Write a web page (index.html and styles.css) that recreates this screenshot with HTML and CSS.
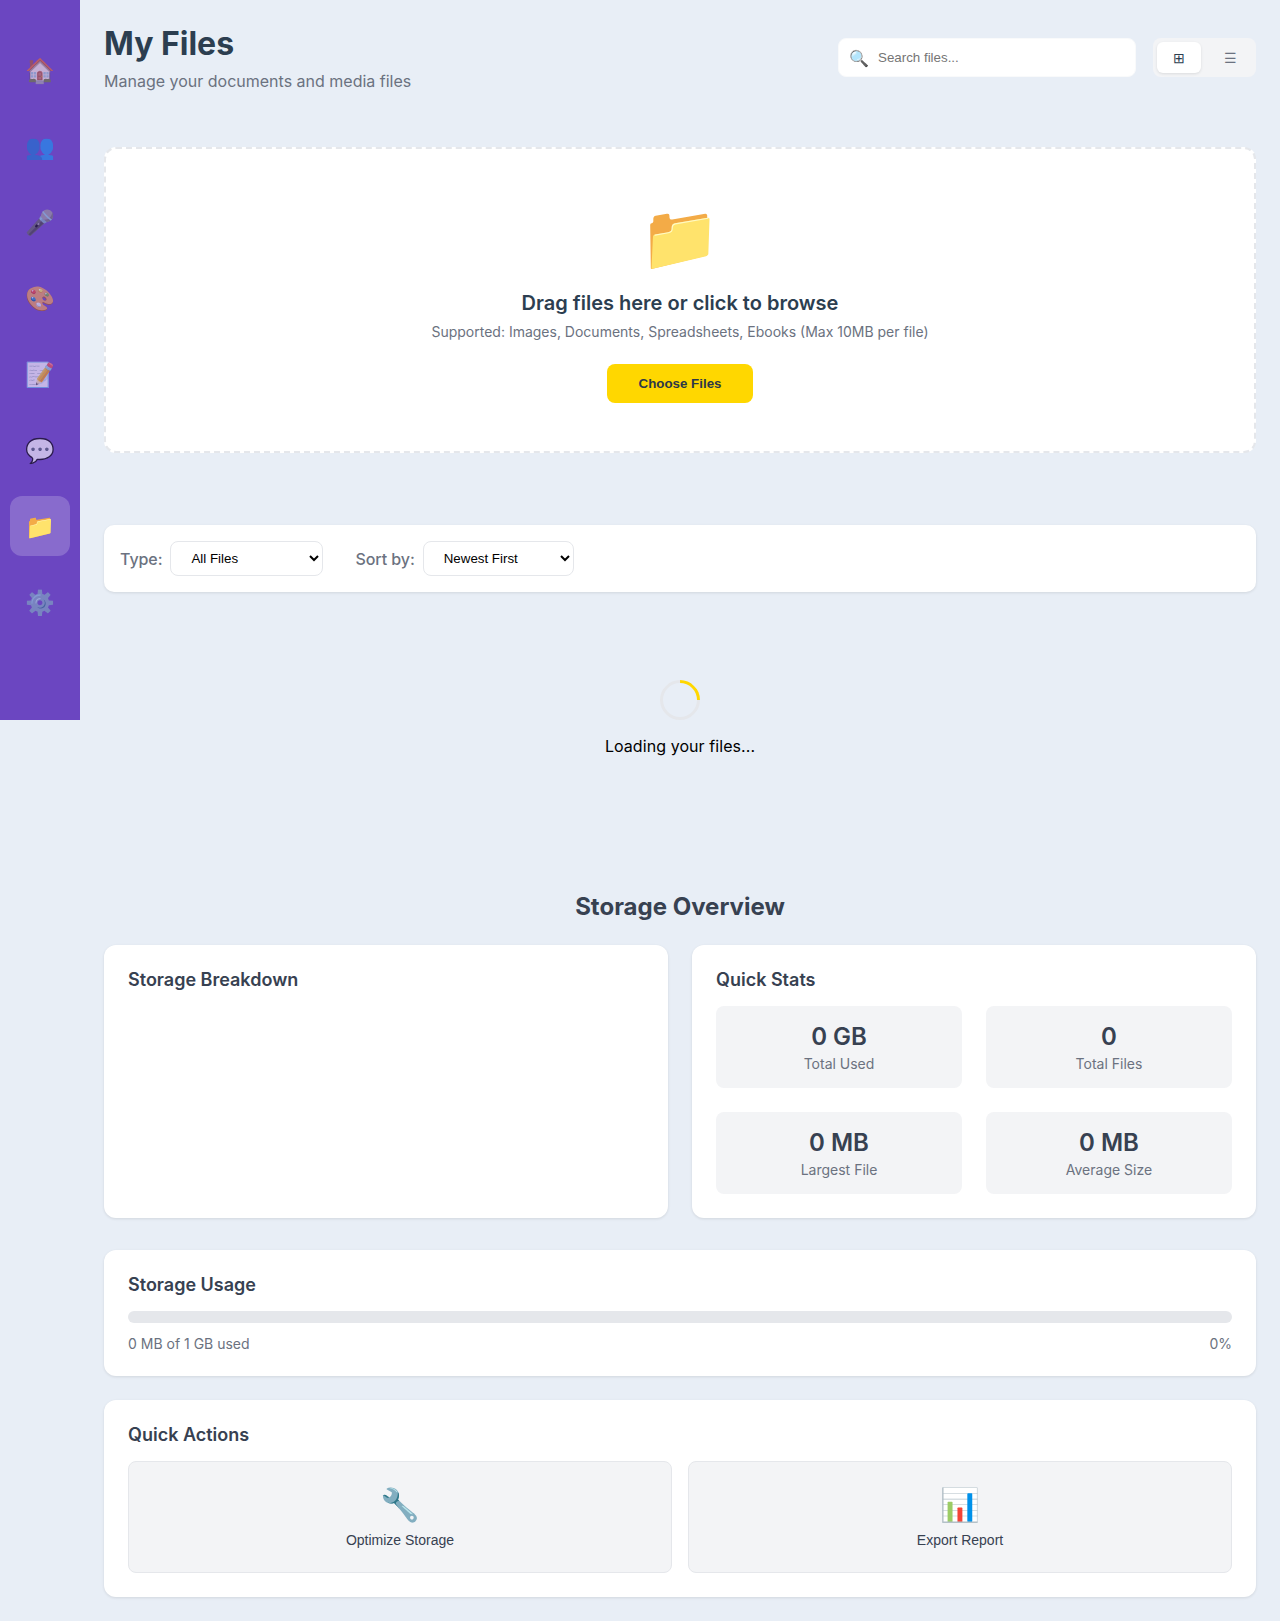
FILE: index.html
```html
<!DOCTYPE html>
<html lang="en">
<head>
<meta charset="utf-8">
<title>My Files</title>
<link rel="stylesheet" href="styles.css">
</head>
<body>
<div class="app">
  <nav class="sidebar">
    <a class="nav-item">🏠</a>
    <a class="nav-item">👥</a>
    <a class="nav-item">🎤</a>
    <a class="nav-item">🎨</a>
    <a class="nav-item">📝</a>
    <a class="nav-item">💬</a>
    <a class="nav-item active">📁</a>
    <a class="nav-item">⚙️</a>
  </nav>
  <main class="main">
    <header class="header">
      <div>
        <h1 class="title">My Files</h1>
        <p class="subtitle">Manage your documents and media files</p>
      </div>
      <div class="header-tools">
        <div class="search">
          <span class="search-icon">🔍</span>
          <input class="search-input" type="text" placeholder="Search files...">
        </div>
        <div class="view-toggle">
          <button class="view-btn active">⊞</button>
          <button class="view-btn">☰</button>
        </div>
      </div>
    </header>

    <section class="upload">
      <div class="upload-icon">📁</div>
      <h3 class="upload-title">Drag files here or click to browse</h3>
      <p class="upload-note">Supported: Images, Documents, Spreadsheets, Ebooks (Max 10MB per file)</p>
      <button class="choose-btn">Choose Files</button>
    </section>

    <section class="filters">
      <div class="filter">
        <label class="filter-label">Type:</label>
        <select class="filter-select type-select"><option>All Files</option></select>
      </div>
      <div class="filter">
        <label class="filter-label">Sort by:</label>
        <select class="filter-select sort-select"><option>Newest First</option></select>
      </div>
    </section>

    <section class="loading">
      <div class="spinner"></div>
      <p class="loading-text">Loading your files...</p>
    </section>

    <h2 class="overview-title">Storage Overview</h2>

    <div class="overview-grid">
      <section class="card">
        <h3 class="card-title">Storage Breakdown</h3>
      </section>
      <section class="card">
        <h3 class="card-title">Quick Stats</h3>
        <div class="stats">
          <div class="stat"><div class="stat-value">0 GB</div><div class="stat-label">Total Used</div></div>
          <div class="stat"><div class="stat-value">0</div><div class="stat-label">Total Files</div></div>
          <div class="stat"><div class="stat-value">0 MB</div><div class="stat-label">Largest File</div></div>
          <div class="stat"><div class="stat-value">0 MB</div><div class="stat-label">Average Size</div></div>
        </div>
      </section>
    </div>

    <section class="card usage">
      <h3 class="card-title">Storage Usage</h3>
      <div class="usage-bar"></div>
      <div class="usage-info"><span>0 MB of 1 GB used</span><span>0%</span></div>
    </section>

    <section class="card">
      <h3 class="card-title">Quick Actions</h3>
      <div class="actions">
        <button class="action"><span class="action-icon">🔧</span><span>Optimize Storage</span></button>
        <button class="action"><span class="action-icon">📊</span><span>Export Report</span></button>
      </div>
    </section>
  </main>
</div>
</body>
</html>
```
FILE: styles.css
```css
* { box-sizing: border-box; }
html, body { margin: 0; padding: 0; }
body {
  background: #e8eef6;
  font-family: Inter, "Noto Sans", sans-serif;
  color: #000;
}
.app { display: flex; align-items: flex-start; }
.sidebar {
  width: 80px;
  height: 720px;
  flex: none;
  background: #6b46c1;
  padding: 40px 10px 0;
  display: flex;
  flex-direction: column;
  gap: 16px;
}
.nav-item {
  width: 60px;
  height: 60px;
  border-radius: 12px;
  display: flex;
  align-items: center;
  justify-content: center;
  font-size: 24px;
  opacity: 0.6;
}
.nav-item.active { background: rgba(255,255,255,0.2); opacity: 1; }
.main { flex: 1; min-width: 0; padding: 24px; }
.header {
  display: flex;
  justify-content: space-between;
  align-items: center;
  margin-bottom: 56px;
}
.title { margin: 0 0 8px; font-size: 32px; font-weight: 700; color: #2c3e50; }
.subtitle { margin: 0; font-size: 16px; color: #6b7280; }
.header-tools { display: flex; gap: 17px; }
.search {
  width: 298px;
  height: 39px;
  background: #fff;
  border: 1px solid #f9fafb;
  border-radius: 8px;
  display: flex;
  align-items: center;
  padding-left: 10px;
  gap: 9px;
}
.search-icon { font-size: 16px; line-height: 1; }
.search-input {
  flex: 1;
  min-width: 0;
  border: 0;
  outline: 0;
  background: transparent;
  font-family: "Liberation Sans", sans-serif;
  font-size: 13.33px;
  padding: 0;
}
.view-toggle {
  display: flex;
  gap: 8px;
  padding: 4px;
  height: 39px;
  width: 103px;
  background: #f3f4f6;
  border-radius: 8px;
}
.view-btn {
  flex: 1;
  border: 0;
  background: transparent;
  border-radius: 6px;
  font-size: 14px;
  color: #6b7280;
  padding: 0;
  font-family: Inter, "Noto Sans", sans-serif;
}
.view-btn.active { background: #fff; color: #2c3e50; box-shadow: 0 1px 3px rgba(0,0,0,0.1); }
.upload {
  background: #fff;
  border: 2px dashed #e5e7eb;
  border-radius: 12px;
  height: 306px;
  padding: 49px 0 0;
  margin-bottom: 72px;
  text-align: center;
}
.upload-icon { font-size: 64px; line-height: 77px; margin-bottom: 16px; }
.upload-title { margin: 0 0 8px; font-size: 20px; font-weight: 600; color: #2c3e50; }
.upload-note { margin: 0 0 24px; font-size: 14px; color: #6b7280; }
.choose-btn {
  width: 146px;
  height: 39px;
  border: 0;
  border-radius: 8px;
  background: #ffd700;
  color: #2d3748;
  font-family: "Liberation Sans", sans-serif;
  font-size: 13.33px;
  font-weight: 700;
}
.filters {
  background: #fff;
  border-radius: 10px;
  box-shadow: 0 1px 3px rgba(0,0,0,0.1);
  height: 67px;
  padding: 0 16px;
  display: flex;
  align-items: center;
  gap: 32px;
}
.filter { display: flex; align-items: center; gap: 8px; }
.filter-label { font-size: 16px; font-weight: 500; letter-spacing: -0.07px; color: #6b7280; }
.filter-select {
  height: 35px;
  background: #fff;
  border: 1px solid #e5e7eb;
  border-radius: 8px;
  padding: 0 16px;
  font-family: "Liberation Sans", sans-serif;
  font-size: 13.33px;
  color: #000;
}
.type-select { width: 153px; }
.sort-select { width: 151px; }
.loading {
  padding: 88px 0 0;
  text-align: center;
  height: 300px;
}
.spinner {
  width: 40px;
  height: 40px;
  margin: 0 auto 16px;
  border: 3px solid #e5e7eb;
  border-top-color: #ffd700;
  border-radius: 50%;
  transform: rotate(45deg);
}
.loading-text { margin: 0; font-size: 16px; font-weight: 400; letter-spacing: 0.07px; color: #000; }
.overview-title {
  margin: 0 0 24px;
  text-align: center;
  font-size: 24px;
  font-weight: 700;
  color: #374151;
}
.overview-grid {
  display: grid;
  grid-template-columns: 1fr 1fr;
  gap: 24px;
  margin-bottom: 32px;
}
.card {
  background: #fff;
  border-radius: 12px;
  padding: 24px;
  box-shadow: 0 1px 3px rgba(0,0,0,0.1);
}
.usage { margin-bottom: 24px; }
.card-title { margin: 0 0 16px; font-size: 18px; font-weight: 600; color: #374151; }
.stats { display: grid; grid-template-columns: 1fr 1fr; gap: 24px; }
.stat {
  background: #f3f4f6;
  border-radius: 8px;
  height: 82px;
  padding-top: 16px;
  text-align: center;
}
.stat-value { font-size: 24px; font-weight: 600; color: #374151; margin-bottom: 4px; }
.stat-label { font-size: 14px; color: #6b7280; }
.usage-bar { height: 12px; background: #e5e7eb; border-radius: 6px; margin-bottom: 12px; }
.usage-info { display: flex; justify-content: space-between; font-size: 14px; color: #6b7280; }
.actions { display: grid; grid-template-columns: 1fr 1fr; gap: 16px; }
.action {
  background: #f3f4f6;
  border: 1px solid #e5e7eb;
  border-radius: 8px;
  height: 112px;
  display: flex;
  flex-direction: column;
  align-items: center;
  justify-content: center;
  gap: 7px;
  font-family: "Liberation Sans", sans-serif;
  font-size: 14px;
  color: #374151;
}
.action-icon { font-size: 32px; line-height: 39px; }
```
